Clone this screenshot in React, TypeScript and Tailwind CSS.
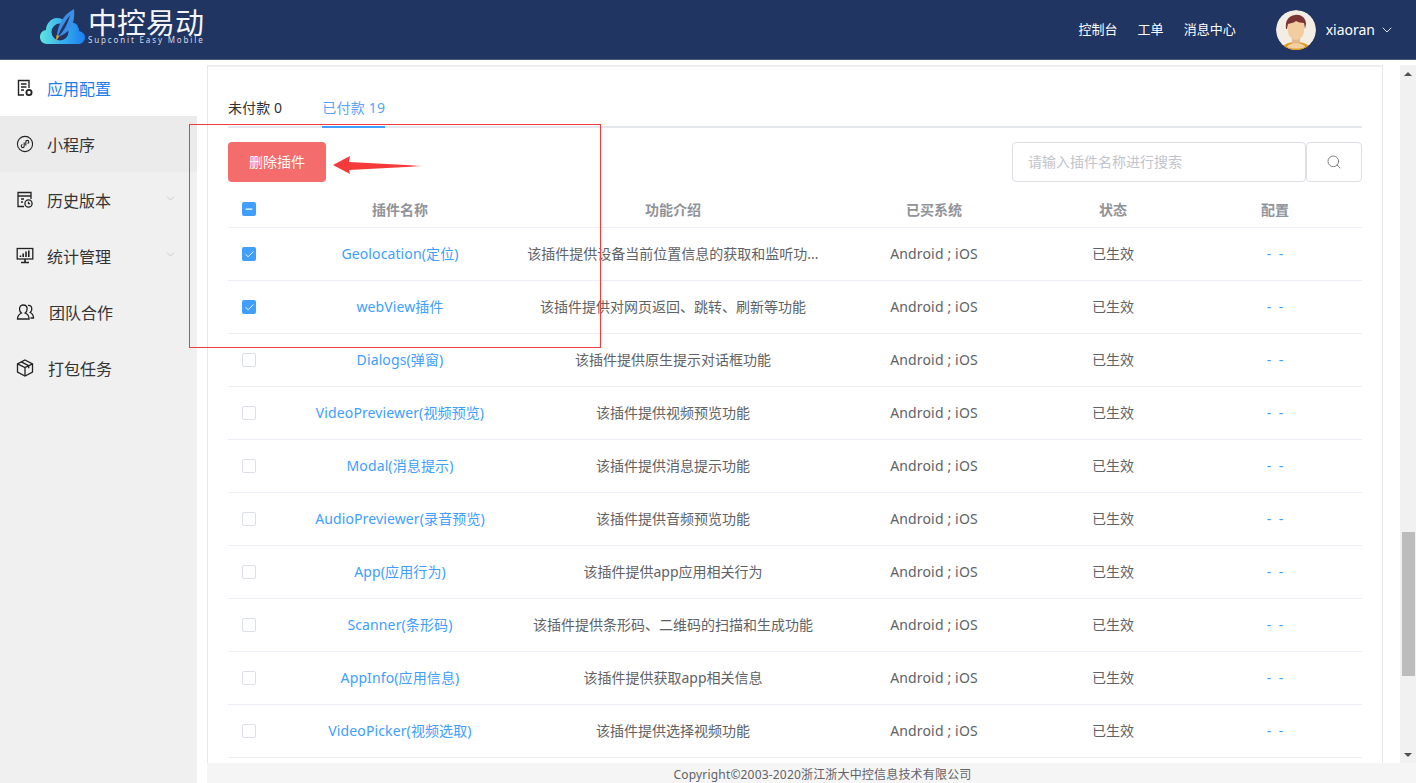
import React from "react";
import { ChevronDown, Search, Check, Minus } from "lucide-react";

const rows = [
  ["Geolocation(定位)", "该插件提供设备当前位置信息的获取和监听功...", true],
  ["webView插件", "该插件提供对网页返回、跳转、刷新等功能", true],
  ["Dialogs(弹窗)", "该插件提供原生提示对话框功能", false],
  ["VideoPreviewer(视频预览)", "该插件提供视频预览功能", false],
  ["Modal(消息提示)", "该插件提供消息提示功能", false],
  ["AudioPreviewer(录音预览)", "该插件提供音频预览功能", false],
  ["App(应用行为)", "该插件提供app应用相关行为", false],
  ["Scanner(条形码)", "该插件提供条形码、二维码的扫描和生成功能", false],
  ["AppInfo(应用信息)", "该插件提供获取app相关信息", false],
  ["VideoPicker(视频选取)", "该插件提供选择视频功能", false],
] as const;

const gridCols = "grid grid-cols-[56px_232px_314px_208px_150px_174px] items-center text-center";

function Logo() {
  return (
    <svg width="46" height="36" viewBox="0 0 46 36" className="shrink-0">
      <defs>
        <linearGradient id="cloud" x1="0" y1="0" x2="1" y2="0">
          <stop offset="0" stopColor="#5fe6df" />
          <stop offset="0.45" stopColor="#3ab4ee" />
          <stop offset="1" stopColor="#1b7ff0" />
        </linearGradient>
      </defs>
      <path d="M7 35C2 35 0 31 0 28c0-4 3-7 6-7 0-5 4-12 11-12 4 0 8 2 10 5 3-1 5-1 7 0 3 1 5 4 5 8 4 1 6 3 6 6 0 4-3 7-6 7Z" fill="url(#cloud)" />
      <circle cx="20" cy="23" r="8.5" fill="#203562" />
      <path d="M17 28C17 17 23 6 34 0c1 9-1 17-6 22-3 3-7 5-11 6Z" fill="#3c8fe8" />
      <path d="M18 27c3-8 7-14 12-21-2 8-5 14-11 21Z" fill="#203562" />
      <path d="M16.500 26l3 1-3.500 5Z" fill="#e2a23a" />
    </svg>
  );
}

function Avatar() {
  return (
    <svg width="40" height="40" viewBox="0 0 40 40" className="rounded-full">
      <circle cx="20" cy="20" r="20" fill="#f3ede4" />
      <path d="M6 40c1-6 6-8 14-8s13 2 14 8Z" fill="#e29d1f" />
      <path d="M11 37c2-3 5-4 9-4s7 1 9 4c-3 2-15 2-18 0Z" fill="#f1cfa2" />
      <rect x="16" y="25" width="8" height="8" fill="#e0b88e" />
      <path d="M12 14c0-5 4-6 8-6s8 1 8 6v7c0 5-4 9-8 9s-8-4-8-9Z" fill="#f2cd9f" />
      <path d="M10 19c-1-8 2-13 9-14 7-1 11 4 11 9l-1 5-1-6c-3 0-6-1-8-2-2 2-6 2-8 3l-1 5Z" fill="#7c3535" />
    </svg>
  );
}

const I = "w-[18px] h-[18px] text-[#222] shrink-0";
const Icons = {
  config: (
    <svg viewBox="0 0 18 18" fill="none" stroke="currentColor" strokeWidth="1.4" className={I}>
      <path d="M8 16H2.500V1.500H13V9" />
      <path d="M5 5h5.500M5 8h5.500M5 11h3" />
      <circle cx="13" cy="13.500" r="2.600" strokeWidth="1.800" />
    </svg>
  ),
  mini: (
    <svg viewBox="0 0 18 18" fill="none" stroke="currentColor" strokeWidth="1.1" className={I}>
      <circle cx="9" cy="9" r="7.600" />
      <path d="M8.200 7.500v3.400c0 1-.7 1.700-1.500 1.700s-1.500-.7-1.500-1.600c0-.7.500-1.300 1.200-1.500M9.800 10.500V7.100c0-1 .7-1.700 1.500-1.700s1.500.7 1.500 1.600c0 .7-.5 1.300-1.200 1.500" />
    </svg>
  ),
  history: (
    <svg viewBox="0 0 18 18" fill="none" stroke="currentColor" strokeWidth="1.3" className={I}>
      <path d="M8 15.500H2V1.500h13V8" />
      <path d="M2 5h13M5 8h3M5 11h2" />
      <circle cx="12.500" cy="12.500" r="3.600" />
      <path d="M12.500 10.800v1.900h1.600" />
    </svg>
  ),
  stat: (
    <svg viewBox="0 0 18 18" fill="none" stroke="currentColor" strokeWidth="1.3" className={I}>
      <rect x="1.200" y="1.500" width="15.600" height="10.500" />
      <path d="M4.500 10V8.500M7.200 10V6.500M10 10V4.500M12.800 10V3.500" strokeWidth="1.600" />
      <path d="M9 12v3M5 15.500h8" strokeWidth="1.600" />
    </svg>
  ),
  team: (
    <svg viewBox="0 0 18 18" fill="none" stroke="currentColor" strokeWidth="1.3" className="w-[19px] h-[18px] text-[#222] shrink-0">
      <path d="M1 16c0-3 2-5 4-6-1.500-1-2-2.500-2-4 0-2.500 1.800-4 3.800-4s3.800 1.500 3.800 4c0 1.500-.6 3-2 4 2.500 1 4 3 4 6Z" />
      <path d="M11.500 2.500c2-.5 3.800 1 3.800 3.400 0 1.400-.5 2.600-1.600 3.600 2 1 3.300 3 3.300 5.500h-3" />
    </svg>
  ),
  box: (
    <svg viewBox="0 0 18 18" fill="none" stroke="currentColor" strokeWidth="1.3" className={I}>
      <path d="M9 1 16.500 4.800v8.400L9 17 1.500 13.200V4.800Z" />
      <path d="M1.500 4.800 9 8.600l7.500-3.800M9 8.600V17M5.200 2.900l7.500 3.800v2.500" />
    </svg>
  ),
};

const menu = [
  { icon: Icons.config, label: "应用配置", bg: "bg-white", text: "text-[#1f7cf0]", gap: "gap-[13px]" },
  { icon: Icons.mini, label: "小程序", bg: "bg-[#ebebeb]", text: "text-[#333]", gap: "gap-[13px]" },
  { icon: Icons.history, label: "历史版本", bg: "", text: "text-[#333]", gap: "gap-[13px]", arrow: true },
  { icon: Icons.stat, label: "统计管理", bg: "", text: "text-[#333]", gap: "gap-[13px]", arrow: true },
  { icon: Icons.team, label: "团队合作", bg: "", text: "text-[#333]", gap: "gap-[14px]" },
  { icon: Icons.box, label: "打包任务", bg: "", text: "text-[#333]", gap: "gap-[14px]" },
];

function Box({ state }: { state: "on" | "off" | "mixed" }) {
  if (state === "off") return <span className="block ml-[14px] w-[14px] h-[14px] rounded-[2px] border border-[#dcdfe6] bg-white" />;
  return (
    <span className="flex items-center justify-center ml-[14px] w-[14px] h-[14px] rounded-[2px] bg-[#409eff] text-white">
      {state === "on" ? <Check size={11} strokeWidth={2} /> : <Minus size={10} strokeWidth={3} />}
    </span>
  );
}

export default function App() {
  return (
    <div className="relative w-[1416px] h-[783px] overflow-hidden flex flex-col bg-white font-['Noto_Sans','Noto_Sans_CJK_SC',sans-serif]">
      <header className="h-[60px] shrink-0 bg-[#203562] border-b border-[#4a5c84] flex items-center justify-between text-white">
        <div className="flex items-center pl-[40px] -mt-[6px]">
          <Logo />
          <div className="ml-[2px] flex flex-col items-start">
            <span className="text-[29px] leading-[27px] text-[#f4f6fa] font-['Noto_Sans_CJK_SC',sans-serif]">中控易动</span>
            <span className="text-[8px] leading-[10px] tracking-[1.85px] text-[#d5dbe8] whitespace-nowrap">Supconit Easy Mobile</span>
          </div>
        </div>
        <div className="flex items-center text-[13px] pr-[21px]">
          <span className="mr-[20px]">控制台</span>
          <span className="mr-[20px]">工单</span>
          <span className="mr-[40px]">消息中心</span>
          <Avatar />
          <span className="ml-[10px] text-[14px]">xiaoran</span>
          <ChevronDown size={16} strokeWidth={1.3} className="ml-[4px] text-white" />
        </div>
      </header>

      <div className="flex-1 flex min-h-0">
        <aside className="w-[197px] shrink-0 bg-[#f0f0f0]">
          {menu.map((m) => (
            <div key={m.label} className={`h-[56px] flex items-center pl-[16px] pr-[20px] text-[16px] ${m.bg} ${m.text} ${m.gap}`}>
              {m.icon}
              <span className="flex-1 mt-[2px]">{m.label}</span>
              {m.arrow && <ChevronDown size={13} strokeWidth={1.2} className="text-[#b8b8b8] -mt-[4px]" />}
            </div>
          ))}
        </aside>

        <main className="flex-1 flex flex-col min-w-0 pl-[10px]">
          <div className="flex-1 min-h-0 flex">
            <div className="flex-1 min-w-0 pr-[17px] pt-[5px]">
              <div className="h-full border-t-2 border-t-[#efefef] border-l border-r border-[#e8e8e8] pl-[20px] pr-[20px] pt-[26px] overflow-hidden">
                <div className="flex h-[33px] border-b-2 border-[#e4e7ed] text-[14px] leading-[30px] box-content -mb-px">
                  <span className="text-[#303133] mr-[40px] tracking-[0.1px]">未付款 0</span>
                  <span className="text-[#5ba4f5] h-[33px] border-b-2 border-[#409eff] box-content tracking-[0.25px]">已付款 19</span>
                </div>
                <div className="flex justify-between mt-[15px]">
                  <button className="w-[98px] h-[40px] rounded-[4px] bg-[#f56c6c] text-white text-[14px] pb-[2px]">删除插件</button>
                  <div className="flex">
                    <div className="w-[294px] h-[40px] border border-[#dcdfe6] rounded-[4px] pl-[15px] pb-[2px] flex items-center text-[14px] text-[#c0c4cc]">请输入插件名称进行搜索</div>
                    <div className="w-[56px] h-[40px] border border-[#dcdfe6] rounded-[4px] flex items-center justify-center text-[#606266]">
                      <Search size={16} strokeWidth={1.2} />
                    </div>
                  </div>
                </div>
                <div className={`${gridCols} mt-[9px] h-[37px] border-b border-[#ebeef5] text-[14px] font-bold text-[#909399]`}>
                  <Box state="mixed" />
                  <span>插件名称</span>
                  <span>功能介绍</span>
                  <span>已买系统</span>
                  <span>状态</span>
                  <span>配置</span>
                </div>
                {rows.map(([name, desc, on]) => (
                  <div key={name} className={`${gridCols} h-[53px] border-b border-[#ebeef5] text-[14px] text-[#606266]`}>
                    <Box state={on ? "on" : "off"} />
                    <span className="text-[#409eff] whitespace-nowrap tracking-[0.12px] -mt-[2px]">{name}</span>
                    <span className="whitespace-nowrap -mt-[2px]">{desc}</span>
                    <span className="tracking-[0.15px] -mt-[2px]">Android ; iOS</span>
                    <span className="-mt-[2px]">已生效</span>
                    <span className="text-[#409eff] tracking-[2px] pl-[2px] -mt-[2px]">- -</span>
                  </div>
                ))}
              </div>
            </div>
            <div className="w-[16px] shrink-0 mt-[5px] bg-[#f1f1f1] flex flex-col items-center justify-between relative">
              <span className="mt-[7px] w-0 h-0 border-x-[4px] border-x-transparent border-b-[4px] border-b-[#505050]" />
              <span className="absolute left-[2px] top-[467px] w-[13px] h-[144px] bg-[#bcbcbc]" />
              <span className="mb-[6px] w-0 h-0 border-x-[4px] border-x-transparent border-t-[4px] border-t-[#505050]" />
            </div>
          </div>
          <footer className="h-[20px] shrink-0 bg-[#f5f5f5] text-[12px] leading-[24px] text-[#606266] text-center pl-[22px] tracking-[0.18px]">
            Copyright©2003-2020浙江浙大中控信息技术有限公司
          </footer>
        </main>
      </div>

      <div className="absolute left-[189px] top-[124px] w-[412px] h-[224px] border border-[#f23c3c] pointer-events-none" />
      <svg className="absolute left-[333px] top-[155px] pointer-events-none" width="92" height="20" viewBox="0 0 92 20">
        <defs>
          <linearGradient id="arr" x1="0" y1="0" x2="1" y2="0">
            <stop offset="0.85" stopColor="#f63a3a" />
            <stop offset="1" stopColor="#f63a3a" stopOpacity="0" />
          </linearGradient>
        </defs>
        <path d="M0 10 17 1l-1 6 76 4-76 4 1 4Z" fill="url(#arr)" />
      </svg>
    </div>
  );
}
